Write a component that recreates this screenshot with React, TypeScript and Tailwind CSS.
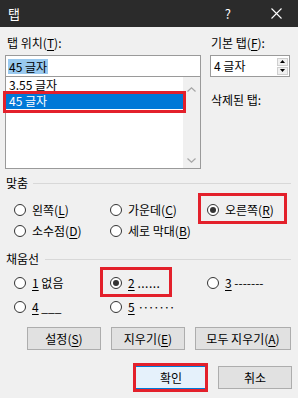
import React from "react";

const U = ({ c }: { c: string }) => <span className="underline underline-offset-2">{c}</span>;

const Radio = ({ checked, children }: { checked?: boolean; children: React.ReactNode }) => (
  <div className="flex items-center h-[20px]">
    <span className="w-[12px] h-[12px] rounded-full border border-[#333] bg-white flex items-center justify-center shrink-0">
      {checked && <span className="w-[6px] h-[6px] rounded-full bg-[#333]" />}
    </span>
    <span className="ml-[6px] whitespace-nowrap">{children}</span>
  </div>
);

const Btn = ({ w, children, primary }: { w: string; children: React.ReactNode; primary?: boolean }) => (
  <div
    className={`${w} h-[23px] flex items-center justify-center border ${
      primary ? "bg-[#e5f1fb] border-[#0078d7]" : "bg-[#e1e1e1] border-[#adadad]"
    }`}
  >
    {children}
  </div>
);

export default function App() {
  return (
    <div
      className="relative w-[298px] h-[398px] bg-[#f0f0f0] overflow-hidden text-[12px] leading-[16px] text-black"
      style={{ fontFamily: '"Noto Sans CJK KR", "Noto Sans", sans-serif' }}
    >
      {/* title bar */}
      <div className="h-[27px] bg-[#2b2b2b] flex items-center text-white">
        <span className="ml-[8px] text-[13px]">탭</span>
        <span className="ml-auto mr-[40px] text-[13px]">?</span>
        <svg width="11" height="11" viewBox="0 0 11 11" className="mr-[16px]">
          <path d="M0.5 0.5 L10.5 10.5 M10.5 0.5 L0.5 10.5" stroke="white" strokeWidth="1.1" />
        </svg>
      </div>

      {/* top section */}
      <div className="flex pl-[5px] pt-[8px]">
        <div className="w-[196px] flex flex-col">
          <div className="h-[16px] pl-[2px]">
            탭 위치(<U c="T" />):
          </div>
          <div className="mt-[4px] h-[22px] border border-[#9a9a9a] bg-white flex items-center pl-[2px]">
            <span className="bg-[#99c9ef] px-[1px] leading-[15px]">45 글자</span>
          </div>
          <div className="h-[92px] border border-t-0 border-[#9a9a9a] bg-white flex">
            <div className="flex-1 flex flex-col">
              <div className="h-[16px] pl-[3px]">3.55 글자</div>
              <div className="h-[16px] pl-[3px] bg-[#0078d7] text-white">45 글자</div>
            </div>
            <div className="w-[17px] bg-[#f0f0f0] flex flex-col items-center justify-between pt-[10px] pb-[5px]">
              <svg width="9" height="5" viewBox="0 0 9 5">
                <path d="M0.5 4.5 L4.5 0.8 L8.5 4.5" fill="none" stroke="#a6a6a6" strokeWidth="1.2" />
              </svg>
              <svg width="9" height="5" viewBox="0 0 9 5">
                <path d="M0.5 0.5 L4.5 4.2 L8.5 0.5" fill="none" stroke="#a6a6a6" strokeWidth="1.2" />
              </svg>
            </div>
          </div>
        </div>
        <div className="ml-[9px] w-[80px] flex flex-col">
          <div className="h-[16px] pl-[1px]">
            기본 탭(<U c="F" />):
          </div>
          <div className="mt-[4px] h-[22px] border border-[#9a9a9a] bg-white flex items-center">
            <span className="pl-[3px]">4 글자</span>
            <div className="ml-auto mr-[1px] flex flex-col gap-[1px]">
              <div className="w-[11px] h-[8px] bg-[#f0f0f0] border border-[#cfcfcf] flex items-center justify-center">
                <svg width="5" height="3" viewBox="0 0 5 3"><path d="M0 3 L2.5 0 L5 3Z" fill="#000" /></svg>
              </div>
              <div className="w-[11px] h-[8px] bg-[#f0f0f0] border border-[#cfcfcf] flex items-center justify-center">
                <svg width="5" height="3" viewBox="0 0 5 3"><path d="M0 0 L2.5 3 L5 0Z" fill="#000" /></svg>
              </div>
            </div>
          </div>
          <div className="mt-[15px] h-[16px] pl-[1px]">삭제된 탭:</div>
        </div>
      </div>

      {/* 맞춤 */}
      <div className="mt-[6px] flex items-center pl-[6px] pr-[7px] h-[16px]">
        <span>맞춤</span>
        <div className="flex-1 ml-[5px] h-px bg-[#d8d8d8]" />
      </div>
      <div className="mt-[9px] pl-[14px] grid grid-cols-[96px_97px_1fr] gap-y-[1px]">
        <Radio>
          왼쪽(<U c="L" />)
        </Radio>
        <Radio>
          가운데(<U c="C" />)
        </Radio>
        <Radio checked>
          오른쪽(<U c="R" />)
        </Radio>
        <Radio>
          소수점(<U c="D" />)
        </Radio>
        <Radio>
          세로 막대(<U c="B" />)
        </Radio>
      </div>

      {/* 채움선 */}
      <div className="mt-[10px] flex items-center pl-[6px] pr-[7px] h-[16px]">
        <span>채움선</span>
        <div className="flex-1 ml-[6px] h-px bg-[#d8d8d8]" />
      </div>
      <div className="mt-[6px] pl-[14px] grid grid-cols-[96px_97px_1fr] gap-y-[4px]">
        <Radio>
          <U c="1" /> 없음
        </Radio>
        <Radio checked>
          <U c="2" /> <span className="tracking-[0.5px]">......</span>
        </Radio>
        <Radio>
          <U c="3" /> -------
        </Radio>
        <Radio>
          <U c="4" /> ___
        </Radio>
        <Radio>
          <U c="5" /> <span className="tracking-[-1.5px]">·······</span>
        </Radio>
      </div>

      {/* buttons */}
      <div className="mt-[10px] flex justify-end pr-[7px] gap-[10px]">
        <Btn w="w-[74px]">
          설정(<U c="S" />)
        </Btn>
        <Btn w="w-[74px]">
          지우기(<U c="E" />)
        </Btn>
        <Btn w="w-[96px]">
          모두 지우기(<U c="A" />)
        </Btn>
      </div>
      <div className="mt-[16px] flex justify-end pr-[6px] gap-[10px]">
        <Btn w="w-[74px]" primary>
          확인
        </Btn>
        <Btn w="w-[74px]">취소</Btn>
      </div>

      {/* red annotation boxes */}
      <div className="absolute left-[3px] top-[91px] w-[183px] h-[22px] border-[3px] border-[#e3202b]" />
      <div className="absolute left-[198px] top-[193px] w-[89px] h-[31px] border-[3px] border-[#e3202b]" />
      <div className="absolute left-[100px] top-[267px] w-[72px] h-[30px] border-[3px] border-[#e3202b]" />
      <div className="absolute left-[133px] top-[363px] w-[75px] h-[29px] border-[3px] border-[#e3202b]" />
    </div>
  );
}
